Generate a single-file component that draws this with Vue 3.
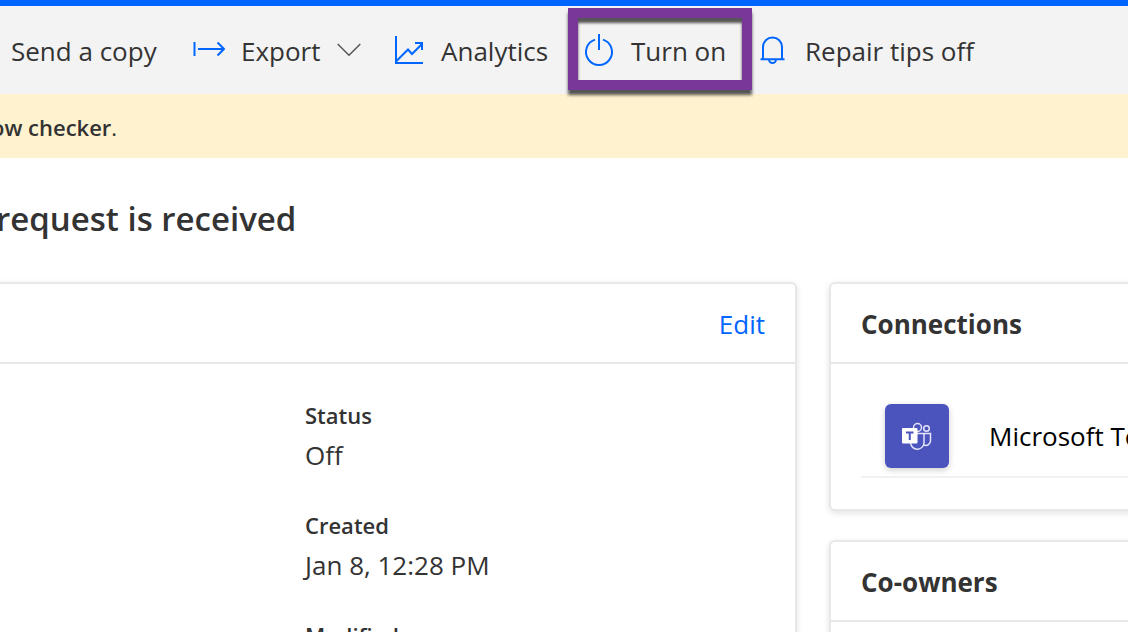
<script setup>
const details = [
  { label: 'Status', value: 'Off' },
  { label: 'Created', value: 'Jan 8, 12:28 PM' },
  { label: 'Modified', value: '' },
]
</script>

<template>
  <div class="page">
    <div class="accent"></div>

    <nav class="toolbar" aria-label="Flow commands">
      <button type="button" class="command send"><span class="label">Send a copy</span></button>
      <button type="button" class="command export">
        <svg class="icon" viewBox="0 0 32 32" aria-hidden="true">
          <path d="M1.500 8v14M5 15h26M24.500 8.500l6.500 6.500-6.500 6.500" />
        </svg>
        <span class="label">Export</span>
        <svg class="chevron" viewBox="0 0 24 14" aria-hidden="true">
          <path d="M.7 1l11.300 11.300L23.300 1" />
        </svg>
      </button>
      <button type="button" class="command analytics">
        <svg class="icon" viewBox="0 0 32 32" aria-hidden="true">
          <path d="M3 2v27.500M2 29h28M3 27.500L15 15.500l4 4.500 10-10M22 9h7v7" />
        </svg>
        <span class="label">Analytics</span>
      </button>
      <button type="button" class="command turn-on">
        <svg class="icon" viewBox="0 0 32 32" aria-hidden="true">
          <path d="M16 0v16M12 5.600A13 13 0 1 0 20 5.600" />
        </svg>
        <span class="label">Turn on</span>
        <span class="highlight"></span>
      </button>
      <button type="button" class="command">
        <svg class="icon" viewBox="0 0 32 32" aria-hidden="true">
          <path d="M3.500 25.200h24M6 25V13a9.500 9.500 0 0 1 19 0v12M12 25.500a3.500 3.500 0 0 0 7 0" />
        </svg>
        <span class="label">Repair tips off</span>
      </button>
    </nav>

    <div class="banner" role="status"><p><strong>ow checker</strong>.</p></div>

    <h1 class="title">request is received</h1>

    <main class="content">
      <section class="card" aria-label="Details">
        <header class="card-head end"><a href="#edit">Edit</a></header>
        <dl class="details">
          <div v-for="item in details" :key="item.label" class="detail">
            <dt>{{ item.label }}</dt>
            <dd>{{ item.value }}</dd>
          </div>
        </dl>
      </section>

      <div class="side">
        <section class="card">
          <header class="card-head"><h2>Connections</h2></header>
          <ul class="connections">
            <li class="connection">
              <span class="tile">
                <svg viewBox="0 0 32 28" aria-hidden="true">
                  <g fill="none" stroke="#e4e5fa" stroke-width="1.500">
                    <circle cx="16.500" cy="5.500" r="4" />
                    <circle cx="25.500" cy="6.500" r="2.800" />
                    <path d="M16 11.500h7v8.500a6.700 6.700 0 0 1-13.400 1M23 11.500h6.500v7a4.700 4.700 0 0 1-6.500 4.500" />
                  </g>
                  <rect x="1" y="6" width="15.500" height="15.500" rx="1" fill="#fff" />
                  <path d="M5 10.500h7.500M8.750 10.500v7.500" fill="none" stroke="#4b53bc" stroke-width="2" />
                </svg>
              </span>
              <span class="name">Microsoft Teams</span>
            </li>
          </ul>
        </section>
        <section class="card">
          <header class="card-head"><h2>Co-owners</h2></header>
          <div class="owners"></div>
        </section>
      </div>
    </main>
  </div>
</template>

<style>
body {
  margin: 0;
  background: #fff;
}
</style>

<style scoped>
.page {
  height: 100vh;
  overflow: hidden;
  color: #333;
  font-family: "Open Sans", "Noto Sans", sans-serif;
  font-size: 26px;
  line-height: 40px;
}
.accent {
  height: 6px;
  background: #0066ff;
}
.toolbar {
  display: flex;
  height: 88px;
  padding-left: 11px;
  background: #f3f3f3;
}
.command {
  position: relative;
  display: flex;
  align-items: center;
  gap: 16px;
  flex: none;
  padding: 0;
  border: 0;
  background: none;
  color: inherit;
  font: inherit;
  white-space: nowrap;
}
.label,
.card-head h2,
.card-head a {
  padding-top: 2px;
}
.send { width: 182px; }
.export { width: 200px; }
.analytics { width: 190px; }
.turn-on { width: 174px; }
.icon {
  width: 32px;
  height: 32px;
  fill: none;
  stroke: #0066ff;
  stroke-width: 2;
}
.chevron {
  width: 24px;
  height: 14px;
  fill: none;
  stroke: #555;
  stroke-width: 1.5;
}
.highlight {
  position: absolute;
  z-index: 1;
  top: 2px;
  left: -15px;
  box-sizing: border-box;
  width: 184px;
  height: 82px;
  border: 10px solid #783799;
  box-shadow: 0 5px 3px rgba(0, 0, 0, 0.65), inset 0 5px 3px rgba(0, 0, 0, 0.65);
}
.banner {
  display: flex;
  align-items: center;
  height: 64px;
  background: #fff2cf;
  font-size: 22px;
}
.banner p {
  margin: 2px 0 0 -9px;
}
.banner strong {
  font-weight: 600;
}
.title {
  margin: 0 0 0 -4px;
  padding: 37px 0 39px;
  font-size: 33px;
  font-weight: 600;
  line-height: 48px;
}
.content {
  display: grid;
  grid-template-columns: minmax(0, 1fr) 307px;
  align-items: start;
  gap: 32px;
  margin: 0 -8px;
}
.side {
  display: grid;
  gap: 29px;
}
.card {
  border: 2px solid #e8e8e8;
  border-radius: 6px;
  background: #fff;
  box-shadow: 0 2px 6px rgba(0, 0, 0, 0.12);
}
.card-head {
  display: flex;
  align-items: center;
  height: 78px;
  padding: 0 30px;
  border-bottom: 2px solid #e8e8e8;
}
.end {
  justify-content: flex-end;
}
.card-head a {
  color: #0066ff;
  text-decoration: none;
}
.card-head h2 {
  margin: 0;
  font-size: 26px;
  font-weight: 700;
}
.details {
  margin: 0;
  padding: 31px 30px 32px 311px;
}
.detail {
  margin-bottom: 30px;
}
dt {
  font-size: 22px;
  font-weight: 600;
}
dd {
  min-height: 40px;
  margin: 0;
}
.connections {
  margin: 0;
  padding: 40px 0 31px 30px;
  list-style: none;
}
.connection {
  display: flex;
  align-items: center;
  gap: 40px;
  padding: 0 0 8px 24px;
  border-bottom: 2px solid #f1f1f1;
  color: #000;
}
.tile {
  display: flex;
  flex: none;
  align-items: center;
  justify-content: center;
  width: 64px;
  height: 64px;
  border-radius: 6px;
  background: #4b53bc;
  box-shadow: 0 2px 6px rgba(0, 0, 0, 0.2);
}
.tile svg {
  width: 32px;
  height: 28px;
}
.name {
  white-space: nowrap;
}
.owners {
  height: 160px;
}
</style>
